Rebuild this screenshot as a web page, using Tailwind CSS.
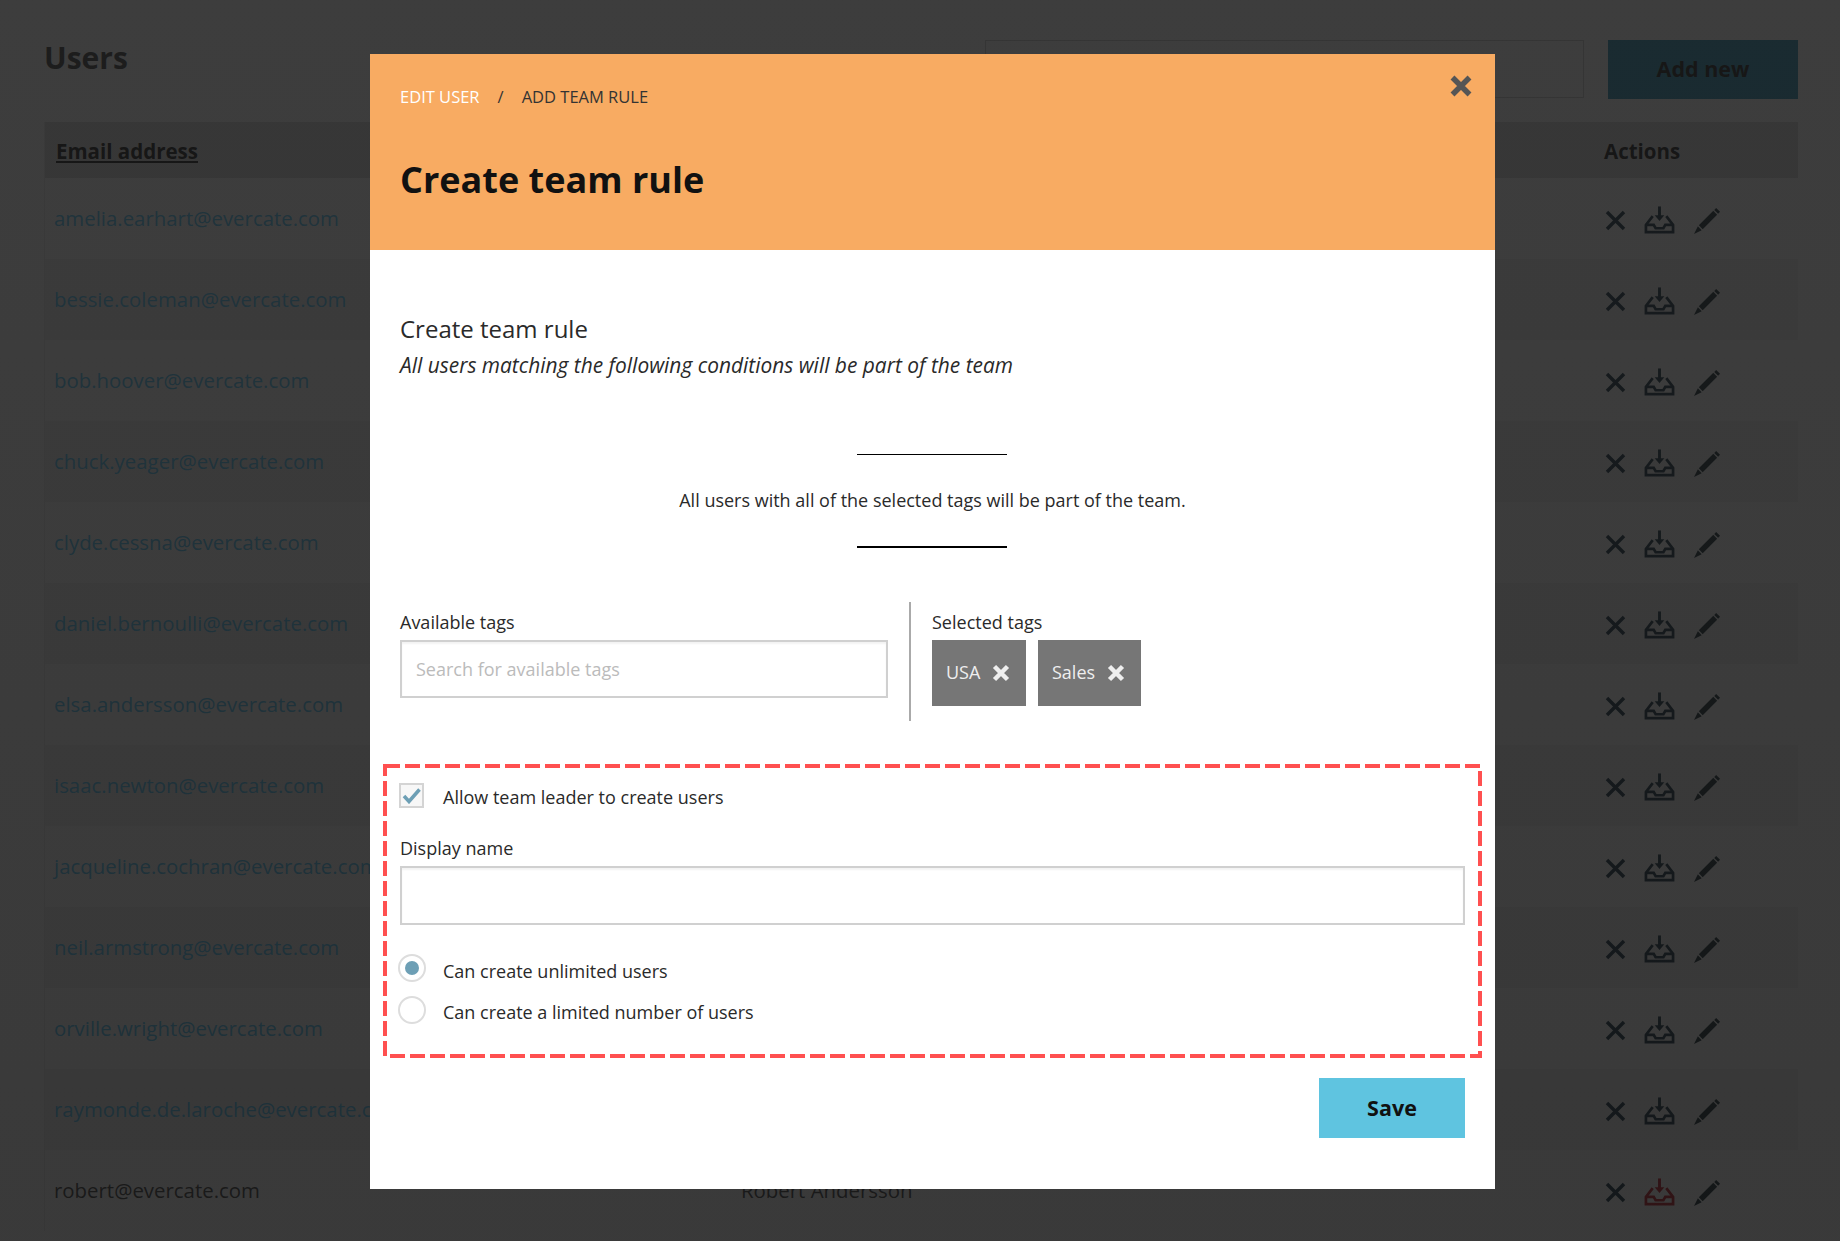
<!DOCTYPE html>
<html lang="en">
<head>
  <meta charset="UTF-8">
  <meta name="viewport" content="width=device-width, initial-scale=1.0">
  <title>Users</title>
  <script src="https://cdn.jsdelivr.net/npm/@tailwindcss/browser@4"></script>
</head>
<body class="bg-white font-['Open_Sans',sans-serif] h-[1241px] overflow-hidden relative">

  <!-- Users page behind the dialog -->
  <div class="pt-[40px] pl-[44px] pr-[42px]">
    <div class="flex items-start h-[59px]">
      <h1 class="text-[30px] font-bold text-[#2a2a2a] leading-[36px]">Users</h1>
      <input type="text" class="ml-auto w-[599px] h-[58px] border border-[#c8c8c8]">
      <button class="ml-[24px] w-[190px] h-[59px] bg-[#1a88ae] text-[21.500px] font-bold text-black">Add new</button>
    </div>

    <div class="mt-[23px] border-l border-[#e8e8e8]">
      <div class="flex items-center h-[56px] pt-[2px] bg-[#d4d4d4] text-[20.500px] font-bold text-black">
        <span class="ml-[11px] underline">Email address</span>
        <span class="ml-auto w-[194px]">Actions</span>
      </div>
      <div id="rows"></div>
    </div>
  </div>

  <!-- Dimmed backdrop -->
  <div class="fixed inset-0 bg-linear-to-b from-[#1b1b1b]/85 to-[#171717]/85"></div>

  <!-- Dialog -->
  <div class="absolute left-[370px] top-[54px] w-[1125px] h-[1135px] bg-white text-[#2a2a2a]">
    <div class="relative h-[196px] bg-[#f8ab62] pl-[30px]">
      <div class="pt-[31px] flex text-[16.500px] leading-[24px]">
        <span class="text-white">EDIT USER</span>
        <span class="ml-[18px] text-[#333]">/</span>
        <span class="ml-[18px] text-[#333]">ADD TEAM RULE</span>
      </div>
      <h2 class="mt-[49px] text-[36px] leading-[44px] font-bold text-[#111]">Create team rule</h2>
      <svg class="absolute right-[23px] top-[21px] w-[22px] h-[22px]" viewBox="0 0 22 22">
        <path d="M2.500 2.500 19.500 19.500M19.500 2.500 2.500 19.500" stroke="#555" stroke-width="5.500" fill="none"/>
      </svg>
    </div>

    <div class="px-[30px]">
      <h3 class="mt-[64px] text-[24px] leading-[30px]">Create team rule</h3>
      <p class="mt-[6px] text-[20.900px] leading-[30px] italic">All users matching the following conditions will be part of the team</p>

      <div class="mt-[74px] ml-[457px] w-[150px] border-t border-black"></div>
      <p class="mt-[31px] text-center text-[18px] leading-[28px]">All users with all of the selected tags will be part of the team.</p>
      <div class="mt-[32px] ml-[457px] w-[150px] border-t-2 border-black"></div>

      <div class="mt-[54px] flex h-[119px]">
        <div class="w-[511px] border-r-2 border-[#aaa] pt-[8px]">
          <label class="block text-[18px] leading-[24px]">Available tags</label>
          <input type="text" placeholder="Search for available tags" class="mt-[6px] w-[488px] h-[58px] border-2 border-[#d0d0d0] px-[14px] text-[18px] shadow-[inset_0_2px_2px_rgba(0,0,0,0.05)] placeholder:text-[#bbb]">
        </div>
        <div class="pl-[21px] pt-[8px]">
          <label class="block text-[18px] leading-[24px]">Selected tags</label>
          <div class="mt-[6px] flex gap-[12px]">
            <span class="flex items-center h-[66px] w-[94px] pl-[14px] pb-[2px] bg-[#767676] text-[#eee] text-[18px]">USA
              <svg class="ml-[12px] mt-[2px] w-[18px] h-[18px]" viewBox="0 0 18 18"><path d="M2.500 2.500 15.500 15.500M15.500 2.500 2.500 15.500" stroke="#eee" stroke-width="4.500" fill="none"/></svg>
            </span>
            <span class="flex items-center h-[66px] w-[103px] pl-[14px] pb-[2px] bg-[#767676] text-[#eee] text-[18px]">Sales
              <svg class="ml-[12px] mt-[2px] w-[18px] h-[18px]" viewBox="0 0 18 18"><path d="M2.500 2.500 15.500 15.500M15.500 2.500 2.500 15.500" stroke="#eee" stroke-width="4.500" fill="none"/></svg>
            </span>
          </div>
        </div>
      </div>

      <!-- Red dashed highlight -->
      <div class="relative mt-[44px] -ml-[16px] w-[1097px] h-[292px] pl-[16px] pt-[18px]">
        <svg class="absolute -left-[1px] -top-[1px] w-[1099px] h-[294px]" viewBox="0 0 1099 294">
          <rect x="2" y="2" width="1095" height="290" fill="none" stroke="#ff5050" stroke-width="4" stroke-dasharray="15 5"/>
        </svg>

        <div class="flex items-center h-[25px]">
          <span class="-ml-[1px] w-[25px] h-[25px] border-2 border-[#d4d4d4] bg-[#f7f7f7] flex items-center justify-center">
            <svg class="w-[19px] h-[17px]" viewBox="0 0 19 17"><path d="M2 9 7 14.500 17.500 2.500" stroke="#6d9fb5" stroke-width="3.500" fill="none"/></svg>
          </span>
          <span class="ml-[19px] mt-[2px] text-[18px] leading-[24px]">Allow team leader to create users</span>
        </div>

        <label class="block mt-[28px] text-[18px] leading-[24px]">Display name</label>
        <input type="text" class="block mt-[6px] w-[1065px] h-[59px] border-2 border-[#d0d0d0] shadow-[inset_0_2px_2px_rgba(0,0,0,0.05)]">

        <div class="mt-[29px] -ml-[2px] flex h-[28px]">
          <span class="w-[28px] h-[28px] rounded-full border-2 border-[#ddd] flex items-center justify-center">
            <span class="w-[14px] h-[14px] rounded-full bg-[#6d9fb5]"></span>
          </span>
          <span class="ml-[17px] mt-[5px] text-[18px] leading-[24px]">Can create unlimited users</span>
        </div>
        <div class="mt-[14px] -ml-[2px] flex h-[28px]">
          <span class="w-[28px] h-[28px] rounded-full border-2 border-[#ddd]"></span>
          <span class="ml-[17px] mt-[4px] text-[18px] leading-[24px]">Can create a limited number of users</span>
        </div>
      </div>

      <div class="mt-[21px] flex justify-end">
        <button class="w-[146px] h-[60px] bg-[#5fc4e0] text-[21.500px] font-bold text-[#111]">Save</button>
      </div>
    </div>
  </div>

  <script>
    const users = [
      ['amelia.earhart@evercate.com', ''],
      ['bessie.coleman@evercate.com', ''],
      ['bob.hoover@evercate.com', ''],
      ['chuck.yeager@evercate.com', ''],
      ['clyde.cessna@evercate.com', ''],
      ['daniel.bernoulli@evercate.com', ''],
      ['elsa.andersson@evercate.com', ''],
      ['isaac.newton@evercate.com', ''],
      ['jacqueline.cochran@evercate.com', ''],
      ['neil.armstrong@evercate.com', ''],
      ['orville.wright@evercate.com', ''],
      ['raymonde.de.laroche@evercate.com', ''],
      ['robert@evercate.com', 'Robert Andersson']
    ];

    document.getElementById('rows').innerHTML = users.map((u, i) => {
      const self = i === users.length - 1;
      return `
      <div class="flex items-center h-[81px] text-[20.400px] ${i % 2 ? 'bg-[#f2f2f2]' : 'bg-white'}">
        <span class="ml-[9px] w-[687px] ${self ? 'text-[#2a2a2a]' : 'text-[#43c1f7]'}">${u[0]}</span>
        <span class="text-[#2a2a2a]">${u[1]}</span>
        <span class="ml-auto w-[194px] flex items-center mt-[4px]">
          <svg class="ml-[1px] w-[21px] h-[21px]" viewBox="0 0 21 21"><path d="M2 2 19 19M19 2 2 19" stroke="#002030" stroke-width="3.500" fill="none"/></svg>
          <svg class="ml-[18px] -mt-[2px] w-[31px] h-[28px]" viewBox="0 0 32 28" fill="none" stroke="${self ? '#b80010' : '#002030'}" stroke-width="2.800">
            <path d="M16 0V10" stroke-width="3"/>
            <path d="M11 9H21L16 15Z" fill="${self ? '#b80010' : '#002030'}" stroke="none"/>
            <path d="M9 10 2 19V26.500H30V19L23 10"/>
            <path d="M2 19H10L12 22.500H20L22 19H30"/>
          </svg>
          <svg class="ml-[19px] w-[27px] h-[27px]" viewBox="0 0 28 28" fill="#001820">
            <path d="M5 19 20 4 24 8 9 23Z"/>
            <path d="M21 3 23 1 27 5 25 7Z"/>
            <path d="M4 20 8 24 0 28Z"/>
          </svg>
        </span>
      </div>`;
    }).join('');
  </script>
</body>
</html>
